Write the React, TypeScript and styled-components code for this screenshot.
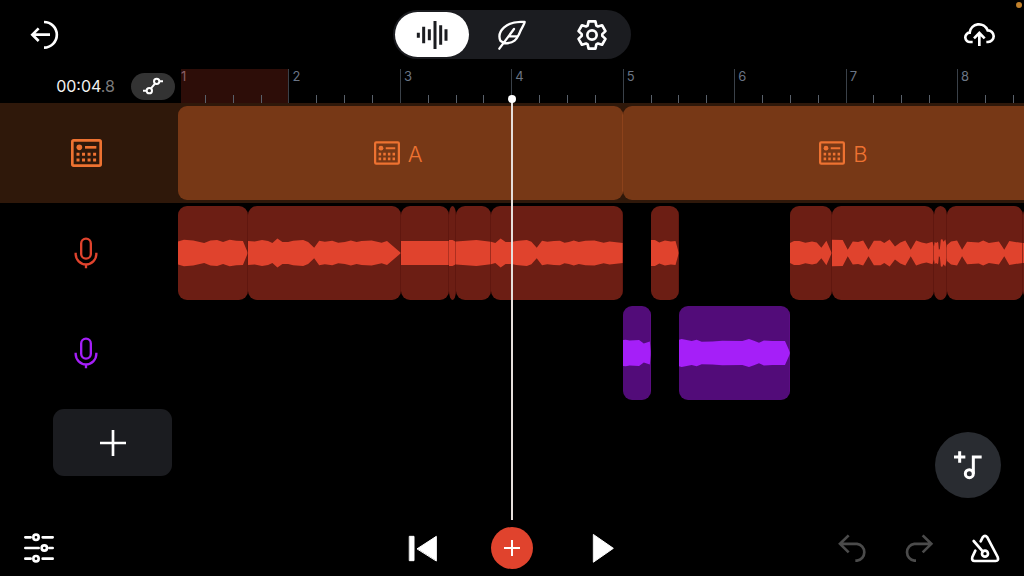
import React from "react";
import styled, { createGlobalStyle } from "styled-components";

const VISIBLE_BARS = 7.6;
const HEAD_WIDTH = 178;
const share = (bars: number) => `${(bars / VISIBLE_BARS) * 100}%`;

const GlobalStyle = createGlobalStyle`
  *, *::before, *::after { box-sizing: border-box; }
  body {
    margin: 0;
    background: #000;
    color: #fff;
    font-family: Inter, "Liberation Sans", sans-serif;
    overflow-x: hidden;
  }
  button {
    border: 0;
    padding: 0;
    background: none;
    color: inherit;
    font: inherit;
    cursor: pointer;
  }
  svg { display: block; flex: none; }
`;

const Page = styled.div`
  display: flex;
  flex-direction: column;
  min-height: 100vh;
`;

const Header = styled.header`
  position: relative;
  display: grid;
  grid-template-columns: 1fr auto 1fr;
  align-items: center;
  padding: 10px 24px;
`;

const StatusDot = styled.span`
  position: absolute;
  top: 2px;
  right: 2px;
  width: 6px;
  height: 6px;
  border-radius: 50%;
  background: #c2812b;
`;

const IconButton = styled.button<{ $end?: boolean }>`
  display: flex;
  align-items: center;
  justify-content: center;
  justify-self: ${(p) => (p.$end ? "end" : "start")};
  width: 42px;
  height: 42px;

  &:disabled { color: #4b4b4b; }
`;

const ViewSwitch = styled.nav`
  display: flex;
  gap: 6px;
  padding: 2px;
  border-radius: 25px;
  background: #1b1c20;
`;

const ViewButton = styled.button<{ $active?: boolean }>`
  display: flex;
  align-items: center;
  justify-content: center;
  width: 74px;
  height: 45px;
  border-radius: 23px;
  background: ${(p) => (p.$active ? "#fff" : "transparent")};
  color: ${(p) => (p.$active ? "#1b1c20" : "#fff")};
`;

const Workspace = styled.main`
  position: relative;
  flex: 1;
`;

const Row = styled.div<{ $selected?: boolean }>`
  display: grid;
  grid-template-columns: ${HEAD_WIDTH}px minmax(0, 1fr);
  background: ${(p) => (p.$selected ? "#2f180a" : "transparent")};
`;

const TimeCell = styled.div`
  display: flex;
  align-items: center;
  justify-content: flex-end;
  gap: 16px;
  padding-right: 3px;
`;

const Time = styled.time`
  font-size: 16px;
  line-height: 20px;
  color: #f2f2f2;
`;

const Tenths = styled.span`
  color: #7a7a7a;
`;

const AutomationButton = styled.button`
  display: flex;
  align-items: center;
  justify-content: center;
  width: 44px;
  height: 27px;
  border-radius: 14px;
  background: #333;
`;

const Ruler = styled.div`
  display: flex;
  height: 34px;
  margin-left: -1px;
  overflow: hidden;
`;

const Bar = styled.div<{ $looped?: boolean }>`
  position: relative;
  flex: none;
  display: flex;
  background: ${(p) => (p.$looped ? "linear-gradient(90deg, #000 3px, #2d0d08 3px)" : "transparent")};
  color: ${(p) => (p.$looped ? "#8a5f66" : "#6b7585")};
  border-left: 1px solid ${(p) => (p.$looped ? "#000" : "#3a4149")};
`;

const BarNumber = styled.span`
  position: absolute;
  top: 0;
  left: 3px;
  font-size: 13px;
  line-height: 15px;
`;

const Beat = styled.i`
  flex: 1;
  align-self: flex-end;
  height: 8px;
  border-right: 1px solid #59606a;

  &:last-child { border-right: 0; }
`;

const TrackHead = styled.button`
  display: flex;
  align-items: center;
  justify-content: center;
  padding-right: 6px;
`;

const Lane = styled.div`
  display: flex;
  padding: 3px 0;
  height: 100px;
  overflow: hidden;
`;

const Clip = styled.div<{ $fill: string; $ink: string; $edge: string }>`
  position: relative;
  flex: none;
  display: flex;
  align-items: center;
  justify-content: center;
  gap: 8px;
  height: 94px;
  overflow: hidden;
  border-radius: min(9px, 50%) / 9px;
  background: ${(p) => p.$fill};
  color: ${(p) => p.$ink};

  &::after {
    content: "";
    position: absolute;
    inset: 0;
    border-right: 1px solid ${(p) => p.$edge};
  }
`;

const ClipTitle = styled.span`
  padding: 1px 5px 0 0;
  font-size: 22px;
  font-weight: 300;
  line-height: 24px;
`;

const AddTrack = styled.button`
  display: flex;
  align-items: center;
  justify-content: center;
  width: 119px;
  height: 67px;
  margin: 6px 0 0 53px;
  border-radius: 11px;
  background: #1b1c20;
`;

const Playhead = styled.div`
  position: absolute;
  top: 30px;
  bottom: 0;
  width: 2px;
  margin-left: -1px;
  background: #e6dfdb;

  &::before {
    content: "";
    position: absolute;
    top: -4px;
    left: -3px;
    width: 8px;
    height: 8px;
    border-radius: 50%;
    background: #fff;
  }
`;

const LoopButton = styled.button`
  position: absolute;
  right: 23px;
  bottom: 22px;
  display: flex;
  align-items: center;
  justify-content: center;
  width: 66px;
  height: 66px;
  border-radius: 50%;
  background: #292c31;
`;

const Footer = styled.footer`
  display: grid;
  grid-template-columns: 1fr auto 1fr;
  align-items: center;
  height: 56px;
  padding: 0 18px;
`;

const Transport = styled.div`
  display: flex;
  gap: 48px;
`;

const History = styled.div`
  display: flex;
  justify-content: flex-end;
  gap: 24px;
`;

const RecordButton = styled(IconButton)`
  border-radius: 50%;
  background: #e0432d;
`;

type GlyphProps = {
  box: string;
  w: number;
  h: number;
  stroke?: number;
  round?: boolean;
  children: React.ReactNode;
};

const Glyph = ({ box, w, h, stroke = 8, round, children }: GlyphProps) => (
  <svg
    viewBox={box}
    width={w}
    height={h}
    fill="none"
    stroke="currentColor"
    strokeWidth={stroke}
    strokeLinecap={round ? "round" : "butt"}
    strokeLinejoin={round ? "round" : "miter"}
    aria-hidden="true"
  >
    {children}
  </svg>
);

const gearPath = () => {
  const pts: string[] = [];
  for (let k = 0; k < 6; k++) {
    for (const [offset, r] of [[-25, 31], [-14, 42], [14, 42], [25, 31]]) {
      const a = ((k * 60 - 90 + offset) * Math.PI) / 180;
      pts.push(`${(r * Math.cos(a)).toFixed(1)} ${(r * Math.sin(a)).toFixed(1)}`);
    }
  }
  return `M${pts.join("L")}Z`;
};

const DrumIcon = ({ w, h }: { w: number; h: number }) => (
  <Glyph box="0 0 93 84" w={w} h={h} stroke={8}>
    <rect x="4" y="4" width="85" height="76" rx="4" />
    <circle cx="25" cy="25" r="8.500" fill="currentColor" stroke="none" />
    <path d="M42 25H76" />
    <path d="M16.500 46H80M16.500 63H80" strokeWidth="9" strokeDasharray="9 7.600" />
  </Glyph>
);

const MicIcon = () => (
  <Glyph box="223 37 72 96" w={24} h={32} stroke={7}>
    <rect x="244.500" y="42" width="29" height="60" rx="14.500" />
    <path d="M228 84V88A31 31 0 0 0 290 88V84M259 119V131" />
  </Glyph>
);

type Point = [number, number];
type ClipData = { start: number; end: number; title?: string; wave?: Point[] };

const Wave = ({ points }: { points: Point[] }) => {
  const width = points[points.length - 1][0];
  const top = points.map(([x, a]) => `${x} ${142 - a}`);
  const bottom = [...points].reverse().map(([x, a]) => `${x} ${142 + a}`);
  return (
    <svg width="100%" height="100%" viewBox={`0 0 ${width} 284`} preserveAspectRatio="none" aria-hidden="true">
      <path d={`M${[...top, ...bottom].join("L")}Z`} fill="currentColor" />
    </svg>
  );
};

type Track = {
  name: string;
  icon: React.ReactNode;
  ink: string;
  fill: string;
  edge: string;
  selected?: boolean;
  clips: ClipData[];
};

const tracks: Track[] = [
  {
    name: "Drum machine",
    icon: <DrumIcon w={31} h={28} />,
    ink: "#ee7231",
    fill: "#773816",
    edge: "rgba(190, 90, 40, 0.3)",
    selected: true,
    clips: [
      { start: 0, end: 4, title: "A" },
      { start: 4, end: 8, title: "B" },
    ],
  },
  {
    name: "Voice 1",
    icon: <MicIcon />,
    ink: "#e0432d",
    fill: "#6c1e14",
    edge: "rgba(70, 10, 5, 0.3)",
    clips: [
      { start: 0, end: 0.625, wave: [[0, 35], [18, 40], [46, 38], [79, 30], [98, 38], [118, 39], [136, 33], [156, 40], [176, 37], [196, 36], [210, 2]] },
      { start: 0.625, end: 2, wave: [[0, 36], [20, 35], [42, 39], [60, 36], [73, 30], [88, 44], [103, 33], [120, 33], [135, 37], [165, 39], [180, 33], [198, 16], [213, 37], [230, 34], [252, 37], [270, 31], [290, 33], [308, 38], [325, 33], [340, 36], [370, 38], [400, 31], [416, 36], [458, 0]] },
      { start: 2, end: 2.4375, wave: [[0, 36], [147, 36]] },
      { start: 2.4375, end: 2.5, wave: [[0, 39], [10, 39], [20, 34]] },
      { start: 2.5, end: 2.8125, wave: [[0, 35], [60, 39], [102, 34]] },
      { start: 2.8125, end: 4, wave: [[0, 34], [13, 30], [29, 44], [44, 33], [62, 33], [76, 36], [108, 39], [122, 34], [138, 16], [154, 37], [170, 34], [190, 36], [208, 37], [222, 31], [235, 33], [250, 38], [265, 33], [285, 37], [312, 38], [340, 31], [358, 35], [399, 30]] },
      { start: 4.25, end: 4.5, wave: [[0, 39], [12, 39], [25, 32], [42, 38], [60, 35], [74, 36], [84, 0]] },
      { start: 5.5, end: 5.875, wave: [[0, 30], [12, 36], [28, 36], [46, 31], [66, 35], [80, 32], [94, 16], [109, 37], [125, 0]] },
      { start: 5.875, end: 6.79, wave: [[0, 40], [32, 39], [47, 10], [62, 35], [78, 33], [93, 38], [109, 10], [125, 37], [145, 37], [156, 30], [172, 41], [188, 20], [204, 32], [219, 38], [235, 10], [251, 38], [268, 32], [282, 29], [300, 34], [304, 20]] },
      { start: 6.79, end: 6.91, wave: [[0, 20], [2, 33], [7, 30], [10, 34], [13, 31], [15, 10], [18, 12], [21, 40], [25, 42], [29, 34], [35, 41], [41, 10]] },
      { start: 6.91, end: 7.59, wave: [[0, 24], [12, 35], [30, 38], [45, 10], [60, 34], [95, 32], [108, 38], [125, 30], [155, 35], [171, 10], [186, 36], [226, 30]] },
      { start: 7.59, end: 8, wave: [[0, 30], [136, 30]] },
    ],
  },
  {
    name: "Voice 2",
    icon: <MicIcon />,
    ink: "#a51ff8",
    fill: "#520c79",
    edge: "rgba(110, 20, 150, 0.3)",
    clips: [
      { start: 4, end: 4.25, wave: [[0, 39], [8, 40], [20, 38], [48, 39], [62, 29], [80, 35], [83, 5]] },
      { start: 4.5, end: 5.5, wave: [[0, 40], [8, 42], [38, 36], [53, 40], [68, 34], [100, 35], [130, 37], [190, 36], [210, 42], [225, 37], [240, 31], [255, 38], [280, 36], [318, 36], [334, 0]] },
    ],
  },
];

const TrackRow = ({ track }: { track: Track }) => (
  <Row $selected={track.selected}>
    <TrackHead aria-label={track.name} style={{ color: track.ink }}>
      {track.icon}
    </TrackHead>
    <Lane>
      {track.clips.map((clip, i) => {
        const previousEnd = i === 0 ? 0 : track.clips[i - 1].end;
        return (
          <Clip
            key={clip.start}
            $fill={track.fill}
            $ink={track.ink}
            $edge={track.edge}
            style={{ width: share(clip.end - clip.start), marginLeft: share(clip.start - previousEnd) }}
          >
            {clip.wave && <Wave points={clip.wave} />}
            {clip.title && (
              <>
                <DrumIcon w={26} h={24} />
                <ClipTitle>{clip.title}</ClipTitle>
              </>
            )}
          </Clip>
        );
      })}
    </Lane>
  </Row>
);

export default function App() {
  return (
    <Page>
      <GlobalStyle />
      <Header>
        <IconButton aria-label="Leave project">
          <Glyph box="91 60 90 90" w={30} h={30}>
            <path d="M133 66A38.500 38.500 0 0 1 133 143M98 104H151M117 85L98 104L117 123" />
          </Glyph>
        </IconButton>
        <ViewSwitch aria-label="Views">
          <ViewButton $active aria-label="Tracks">
            <Glyph box="108 59 96 90" w={32} h={30} stroke={9}>
              <path d="M115 97V112M131 79V129M148 87V120M165 62V146M182 75V133M198 87V121" />
            </Glyph>
          </ViewButton>
          <ViewButton aria-label="Lyrics">
            <Glyph box="351 57 90 90" w={30} h={30} stroke={7} round>
              <path d="M358 143L402 84M373 127L361 119C350 92 378 58 434 63C435 68 424 80 417 100C410 114 404 127 373 127M387 106H411" />
            </Glyph>
          </ViewButton>
          <ViewButton aria-label="Settings">
            <Glyph box="-48 -48 96 96" w={32} h={32} round>
              <path d={gearPath()} />
              <circle r="14" />
            </Glyph>
          </ViewButton>
        </ViewSwitch>
        <IconButton $end aria-label="Save to cloud">
          <Glyph box="789 60 96 90" w={32} h={30}>
            <path d="M818 126H811A14 14 0 0 1 809 98A28 28 0 0 1 863 91A17.500 17.500 0 0 1 864 126H859M838 138V100M822 115L838 99L854 115" />
          </Glyph>
        </IconButton>
        <StatusDot />
      </Header>

      <Workspace>
        <Row>
          <TimeCell>
            <Time>
              00:04<Tenths>.8</Tenths>
            </Time>
            <AutomationButton aria-label="Automation">
              <Glyph box="426 231 66 54" w={22} h={18} stroke={6}>
                <circle cx="470" cy="244" r="8" />
                <circle cx="448" cy="272" r="8" />
                <path d="M478 244H489M429 272H440M465 251L453 265" />
              </Glyph>
            </AutomationButton>
          </TimeCell>
          <Ruler>
            {[1, 2, 3, 4, 5, 6, 7, 8].map((n) => (
              <Bar key={n} $looped={n === 1} style={{ width: share(1) }}>
                <BarNumber>{n}</BarNumber>
                <Beat />
                <Beat />
                <Beat />
                <Beat />
              </Bar>
            ))}
          </Ruler>
        </Row>
        {tracks.map((track) => (
          <TrackRow key={track.name} track={track} />
        ))}
        <AddTrack aria-label="Add track">
          <Glyph box="0 0 78 78" w={26} h={26}>
            <path d="M39 0V78M0 39H78" />
          </Glyph>
        </AddTrack>
        <Playhead style={{ left: `calc(${HEAD_WIDTH}px + (100% - ${HEAD_WIDTH}px) * ${3 / VISIBLE_BARS})` }} />
        <LoopButton aria-label="Add loop">
          <Glyph box="400 88 90 90" w={30} h={30} stroke={9}>
            <path d="M403 109H437M420 92V126M461 159V109H486" />
            <circle cx="449" cy="159" r="12" />
          </Glyph>
        </LoopButton>
      </Workspace>

      <Footer>
        <IconButton aria-label="Mixer">
          <Glyph box="0 0 90 90" w={30} h={30} round>
            <path d="M4 13H20M56 13H86M4 45H44M76 45H86M4 77H20M56 77H86" />
            <circle cx="36" cy="13" r="8" />
            <circle cx="61" cy="45" r="8" />
            <circle cx="36" cy="77" r="8" />
          </Glyph>
        </IconButton>
        <Transport>
          <IconButton aria-label="Back to start">
            <Glyph box="54 74 87 81" w={29} h={27} stroke={3} round>
              <path fill="currentColor" d="M59 78H72V151H59ZM82 115L139 78V151Z" />
            </Glyph>
          </IconButton>
          <RecordButton aria-label="Record">
            <Glyph box="0 0 48 48" w={16} h={16} stroke={6}>
              <path d="M24 0V48M0 24H48" />
            </Glyph>
          </RecordButton>
          <IconButton aria-label="Play">
            <Glyph box="600 72 72 87" w={24} h={29} stroke={3} round>
              <path fill="currentColor" d="M611 74L670 115L611 156Z" />
            </Glyph>
          </IconButton>
        </Transport>
        <History>
          <IconButton aria-label="Undo" disabled>
            <Glyph box="50 339 90 90" w={30} h={30}>
              <path d="M82 346L56 371.500L82 397M56 371.500H107A25.500 25.500 0 0 1 107 422H102" />
            </Glyph>
          </IconButton>
          <IconButton aria-label="Redo" disabled>
            <Glyph box="252 339 90 90" w={30} h={30}>
              <path d="M308 346L334 371.500L308 397M334 371.500H283A25.500 25.500 0 0 0 283 422H288" />
            </Glyph>
          </IconButton>
          <IconButton aria-label="Metronome">
            <Glyph box="450 339 90 90" w={30} h={30} round>
              <path d="M482 364L488 352Q495 343 502 352L533 411Q537 423 527 423H464Q454 423 457 411L466 392M461 363L488 394" />
              <circle cx="495" cy="401" r="9" />
            </Glyph>
          </IconButton>
        </History>
      </Footer>
    </Page>
  );
}
